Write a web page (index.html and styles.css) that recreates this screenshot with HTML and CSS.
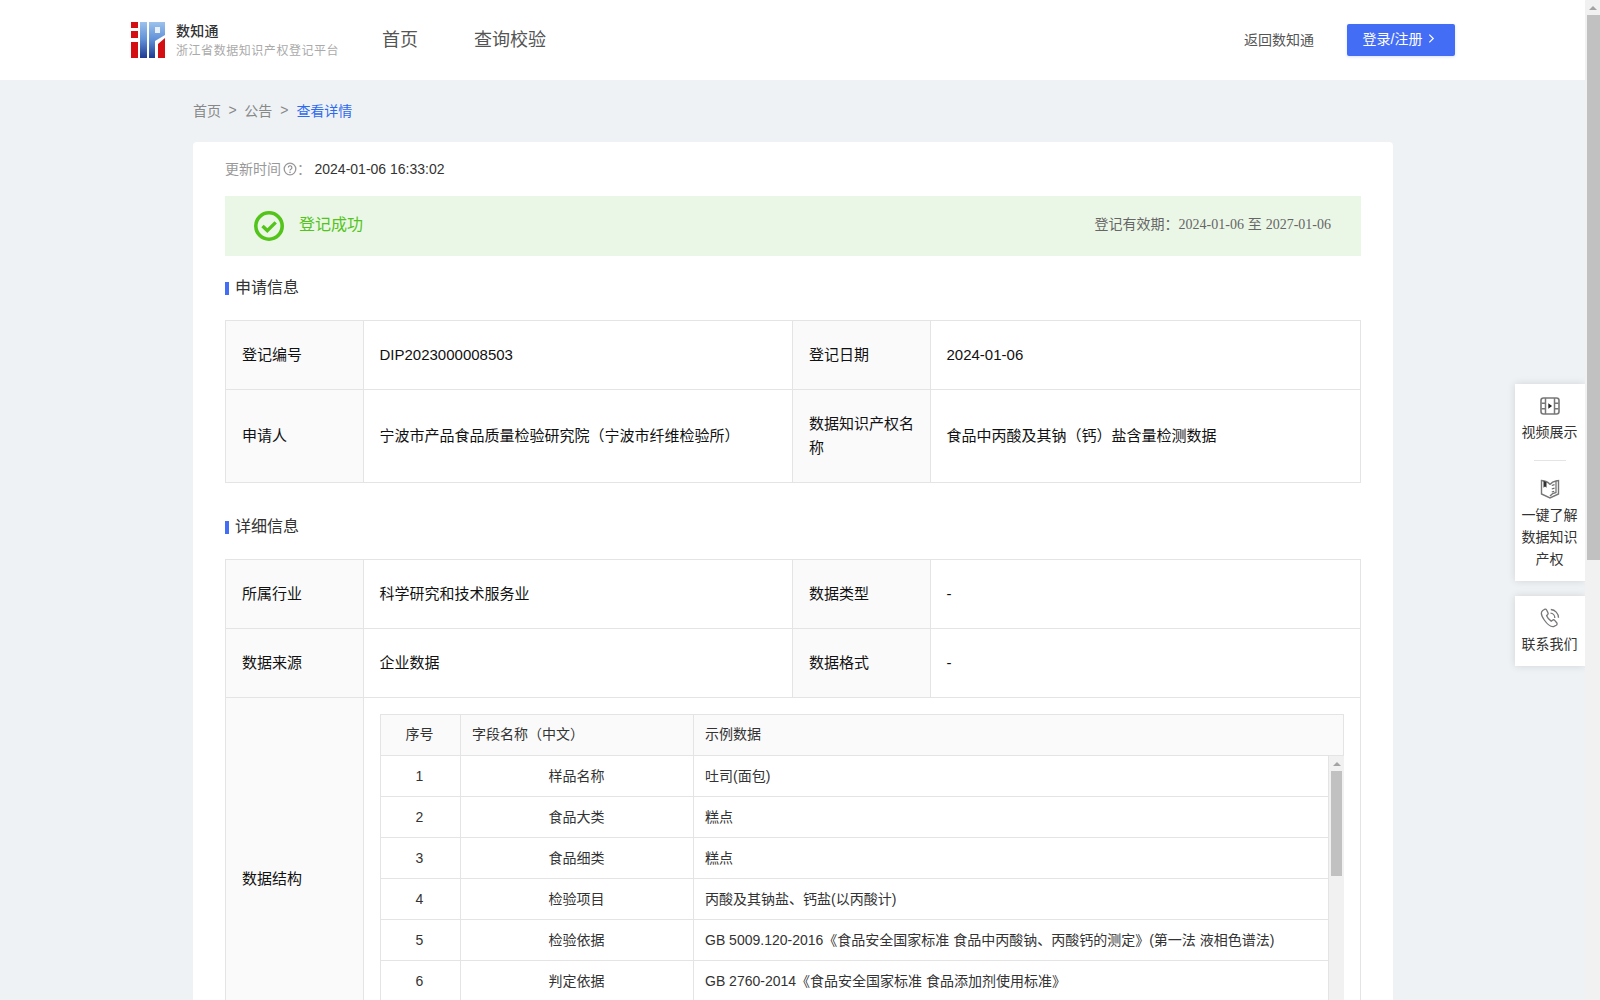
FILE: index.html
```html
<!DOCTYPE html>
<html lang="zh-CN">
<head>
<meta charset="utf-8">
<title>数知通</title>
<link rel="stylesheet" href="styles.css">
</head>
<body>
<div class="viewport">
<header class="topbar">
  <div class="brand">
    <svg class="logo" viewBox="0 0 34 36" width="34" height="36">
      <defs>
        <linearGradient id="lg" x1="0" y1="0" x2="0" y2="1"><stop offset="0" stop-color="#9cc2ec"/><stop offset=".5" stop-color="#5f8fd6"/><stop offset="1" stop-color="#1f3a8f"/></linearGradient>
      </defs>
      <rect x="0" y="0" width="7" height="6" fill="#d40f14"/>
      <rect x="0" y="9" width="7" height="7" fill="#d40f14"/>
      <rect x="0" y="20" width="7" height="16" fill="#d40f14"/>
      <rect x="9" y="0" width="7" height="36" fill="url(#lg)"/>
      <polygon points="18,0 34,0 34,13 24,19 24,36 18,36" fill="url(#lg)"/>
      <rect x="24" y="5" width="5" height="6" fill="#e8f0fb"/>
      <polygon points="27,22 34,16 34,36 27,36" fill="#d40f14"/>
    </svg>
    <div class="brand-text">
      <div class="brand-name">数知通</div>
      <div class="brand-sub">浙江省数据知识产权登记平台</div>
    </div>
  </div>
  <nav class="nav"><a>首页</a><a>查询校验</a></nav>
  <div class="top-right">
    <a class="back">返回数知通</a>
    <a class="login">登录/注册
      <svg viewBox="0 0 8 12" width="7" height="11"><path d="M1.5 1.5 6 6l-4.5 4.5" fill="none" stroke="#fff" stroke-width="1.4"/></svg>
    </a>
  </div>
</header>

<main class="wrap">
  <div class="crumbs"><span>首页</span><i>&gt;</i><span>公告</span><i class="gt2">&gt;</i><span class="cur">查看详情</span></div>
  <section class="card">
    <div class="update">
      <span class="muted">更新时间</span>
      <svg class="q" viewBox="0 0 14 14" width="14" height="14"><circle cx="7" cy="7" r="5.8" fill="none" stroke="#999" stroke-width="1.300"/><path d="M5.300 5.600a1.800 1.800 0 1 1 2.600 1.600c-.6.3-.9.6-.9 1.300" fill="none" stroke="#888" stroke-width="1.100"/><circle cx="7" cy="10.200" r=".8" fill="#888"/></svg>
      <span class="muted colon">：</span>
      <span class="time">2024-01-06 16:33:02</span>
    </div>
    <div class="alert">
      <div class="alert-left">
        <svg viewBox="0 0 30 30" width="30" height="30"><circle cx="15" cy="15" r="13.200" fill="none" stroke="#52c41a" stroke-width="3.600"/><path d="M8.500 15l4.800 4.600 8.400-8.200" fill="none" stroke="#52c41a" stroke-width="3.400"/></svg>
        <span class="ok">登记成功</span>
      </div>
      <div class="valid">登记有效期：<span class="serif">2024-01-06</span> 至 <span class="serif">2027-01-06</span></div>
    </div>

    <h3 class="sec sec-a">申请信息</h3>
    <table class="info">
      <colgroup><col class="c1"><col class="c2"><col class="c3"><col class="c4"></colgroup>
      <tr class="r69"><th>登记编号</th><td>DIP2023000008503</td><th>登记日期</th><td>2024-01-06</td></tr>
      <tr class="r93"><th>申请人</th><td>宁波市产品食品质量检验研究院（宁波市纤维检验所）</td><th>数据知识产权名称</th><td>食品中丙酸及其钠（钙）盐含量检测数据</td></tr>
    </table>

    <h3 class="sec sec-b">详细信息</h3>
    <table class="info">
      <colgroup><col class="c1"><col class="c2"><col class="c3"><col class="c4"></colgroup>
      <tr class="r69"><th>所属行业</th><td>科学研究和技术服务业</td><th>数据类型</th><td>-</td></tr>
      <tr class="r69"><th>数据来源</th><td>企业数据</td><th>数据格式</th><td>-</td></tr>
      <tr>
        <th>数据结构</th>
        <td colspan="3" class="struct-cell">
          <div class="struct">
            <div class="srow shead"><div class="a">序号</div><div class="b">字段名称（中文）</div><div class="c">示例数据</div></div>
            <div class="sbody">
              <div class="srows">
                <div class="srow"><div class="a">1</div><div class="b ctr">样品名称</div><div class="c">吐司(面包)</div></div>
                <div class="srow"><div class="a">2</div><div class="b ctr">食品大类</div><div class="c">糕点</div></div>
                <div class="srow"><div class="a">3</div><div class="b ctr">食品细类</div><div class="c">糕点</div></div>
                <div class="srow"><div class="a">4</div><div class="b ctr">检验项目</div><div class="c">丙酸及其钠盐、钙盐(以丙酸计)</div></div>
                <div class="srow"><div class="a">5</div><div class="b ctr">检验依据</div><div class="c">GB 5009.120-2016《食品安全国家标准 食品中丙酸钠、丙酸钙的测定》(第一法 液相色谱法)</div></div>
                <div class="srow"><div class="a">6</div><div class="b ctr">判定依据</div><div class="c">GB 2760-2014《食品安全国家标准 食品添加剂使用标准》</div></div>
              </div>
              <div class="sbar"><span class="up"></span><span class="thumb"></span></div>
            </div>
          </div>
        </td>
      </tr>
    </table>
  </section>
</main>

<aside class="float">
  <div class="fbox">
    <div class="fitem first">
      <svg viewBox="0 0 20 20" width="20" height="20"><rect x="1" y="2" width="18" height="16" rx="2.500" fill="none" stroke="#777" stroke-width="1.600"/><path d="M5.500 2v16M14.500 2v16M1.500 7.300h4M1.500 12.700h4M14.500 7.300h4M14.500 12.700h4" stroke="#777" stroke-width="1.500" fill="none"/><path d="M8.300 7.300l3.800 2.700-3.800 2.700z" fill="#222"/></svg>
      <div>视频展示</div>
    </div>
    <div class="fline"></div>
    <div class="fitem">
      <svg viewBox="0 0 20 20" width="20" height="20"><path d="M10 5.500C8.500 3.500 5.500 1.800 1.500 1.500V15l8.500 4 8.500-4V1.500l-2.500.5" fill="none" stroke="#777" stroke-width="1.400"/><path d="M10 5.500C11.500 3.500 13.500 2.300 16 2v11.500c-2.500.3-4.500 1.500-6 3.500" fill="none" stroke="#777" stroke-width="1.300"/><path d="M3.500 1.800v7l1.500-1.200 1.500 1.200V3.300z" fill="#333"/><path d="M11.800 6.500l2.700-.8M11.800 10l2.700-.8M11.800 13l2.400-.8" stroke="#666" stroke-width="1.200" fill="none"/></svg>
      <div>一键了解<br>数据知识<br>产权</div>
    </div>
  </div>
  <div class="fbox fbox2">
    <div class="fitem">
      <svg viewBox="0 0 20 20" width="20" height="20"><path d="M4.800 1.200 2.700 2.500C.8 3.900 1.200 7.600 4.300 12c3.200 4.600 6.700 7 9.300 6.600l2.600-1.400c1-.6 1.100-1.700.5-2.500l-2-2.300c-.6-.7-1.500-.7-2.200-.2l-1.300.9C9.600 12 7.200 9.200 6.600 7.700l1.100-1.200c.6-.7.600-1.500.1-2.200L6.600 2c-.4-.8-1.100-1.100-1.800-.8z" fill="none" stroke="#777" stroke-width="1.300"/><path d="M10.500 5.200a4.600 4.600 0 0 1 4.300 4.700M10.800 1.500a8.400 8.400 0 0 1 7.700 8.300" fill="none" stroke="#777" stroke-width="1.300"/></svg>
      <div>联系我们</div>
    </div>
  </div>
</aside>
</div>
<div class="pagebar"><span class="up"></span><span class="thumb"></span></div>
</body>
</html>
```
FILE: styles.css
```css
* { box-sizing: border-box; }
html, body { margin: 0; height: 100%; overflow: hidden; }
body {
  font-family: "Liberation Sans", "Noto Sans CJK SC", sans-serif;
  font-size: 14px;
  color: #333;
  background: #eef2f5;
  display: flex;
}
.viewport { flex: 1; min-width: 0; height: 1000px; overflow: hidden; position: relative; }
.topbar {
  height: 80px;
  background: #fff;
  display: flex;
  align-items: center;
  padding: 0 130px 0 131px;
}
.brand { display: flex; align-items: center; gap: 11px; }
.logo { display: block; }
.brand-text { margin-top: 1px; }
.brand-name { font-size: 14px; line-height: 20px; color: #333; font-weight: 500; letter-spacing: .3px; }
.brand-sub { font-size: 12px; line-height: 20px; color: #aaa; width: 170px; letter-spacing: .55px; white-space: nowrap; }
.nav { display: flex; gap: 56px; margin-left: 36px; font-size: 18px; color: #555; padding-bottom: 4px; }
.top-right { margin-left: auto; display: flex; align-items: center; gap: 33px; }
.back { color: #555; font-size: 14px; padding-bottom: 2px; }
.login {
  width: 108px; height: 32px;
  background: #446df6;
  border-radius: 2px;
  color: #fff;
  display: flex; align-items: center; justify-content: center; gap: 6px;
  padding: 0 4px 4px 0;
  box-shadow: 0 1px 3px rgba(68,109,246,.2);
}
.wrap { width: 1200px; margin-left: 193px; }
.crumbs { height: 62px; display: flex; align-items: center; gap: 7.5px; color: #888; padding-bottom: 2px; }
.crumbs .cur { color: #2e6af0; }
.crumbs i { font-style: normal; }
.crumbs .gt2 { margin: 0 .5px; }
.card { background: #fff; border-radius: 4px; padding: 14px 32px 40px; }
.update { height: 26px; display: flex; align-items: center; }
.muted { color: #999; padding-bottom: 2px; }
.q { margin-left: 2px; }
.colon { width: 14px; margin-right: 3.5px; }
.time { color: #333; }
.alert {
  height: 60px; margin-top: 14px;
  background: #ebf7e6;
  display: flex; align-items: center; justify-content: space-between;
  padding: 0 30px 0 29px;
}
.alert-left { display: flex; align-items: center; gap: 15px; }
.ok { color: #52c41a; font-size: 16px; padding-bottom: 6px; }
.valid { color: #666; font-size: 14px; padding-bottom: 6px; }
.serif { font-family: "Liberation Serif", serif; }
.sec {
  margin: 0;
  font-size: 16px; font-weight: 400; color: #333;
  line-height: 24px;
  padding-left: 10px;
  position: relative;
}
.sec::before {
  content: ""; position: absolute; left: 0; top: 6px;
  width: 4px; height: 13px; background: #446df6;
}
.sec-a { margin-top: 20px; margin-bottom: 20px; }
.sec-b { margin-top: 32px; margin-bottom: 20px; }
table.info { width: 1135px; border-collapse: collapse; table-layout: fixed; border: 1px solid #e4e4e4; }
.c1, .c3 { width: 138px; }
.c2 { width: 429px; }
.c4 { width: 430px; }
table.info th, table.info td { border: 1px solid #e4e4e4; padding: 0 15px 1px 16px; font-size: 15px; font-weight: 400; color: #111; text-align: left; line-height: 24px; }
table.info td { padding-left: 15.5px; }
table.info th { background: #fafafa; }
.r69 { height: 69px; }
.r93 { height: 93px; }
table.info td.struct-cell { padding: 16px; vertical-align: top; }
.struct { border: 1px solid #e4e4e4; border-bottom: 0; width: 964px; color: #333; }
.srow { display: flex; height: 41px; border-bottom: 1px solid #e4e4e4; align-items: stretch; }
.srow > div { display: flex; align-items: center; padding: 0 12px; font-size: 14px; color: #333; line-height: 20px; }
.srow .a { width: 80px; justify-content: center; border-right: 1px solid #e4e4e4; padding: 0 13px 0 11px; }
.srow .b { width: 233px; border-right: 1px solid #e4e4e4; padding: 0 12px 0 11px; }
.srow .b.ctr { justify-content: center; }
.srow .c { flex: 1; padding-left: 11px; }
.shead { background: #fafafa; }
.srow.shead > div { padding-bottom: 2px; }
.sbody { display: flex; height: 289px; overflow: visible; }
.srows { flex: 1; min-width: 0; border-right: 1px solid #e4e4e4; }
.sbar { width: 15px; margin-right: -1px; background: #f1f1f1; display: flex; flex-direction: column; align-items: center; flex: none; }
.sbar .up, .pagebar .up {
  margin: 6px 0 5px; width: 0; height: 0;
  border-left: 4px solid transparent; border-right: 4px solid transparent; border-bottom: 4px solid #a3a3a3;
  flex: none;
}
.sbar .thumb { width: 11px; height: 105px; background: #c1c1c1; }
.float { position: absolute; left: 1515px; top: 384px; width: 70px; }
.fbox { background: #fff; box-shadow: 0 0 8px rgba(0,0,0,.12); padding: 12px 0 11px; }
.fbox2 { margin-top: 15px; padding: 12px 0 11px; }
.fitem { display: flex; flex-direction: column; align-items: center; text-align: center; font-size: 14px; line-height: 22px; color: #333; padding-right: 1px; }
.fitem svg { margin-bottom: 5px; }
.fline { width: 32px; height: 1px; background: #e4e4e4; margin: 17px auto 18px; }
.pagebar { width: 15px; flex: none; height: 1000px; background: #f1f1f1; display: flex; flex-direction: column; align-items: center; }
.pagebar .thumb { width: 13px; height: 545px; background: #c1c1c1; margin-left: 2px; }
```
